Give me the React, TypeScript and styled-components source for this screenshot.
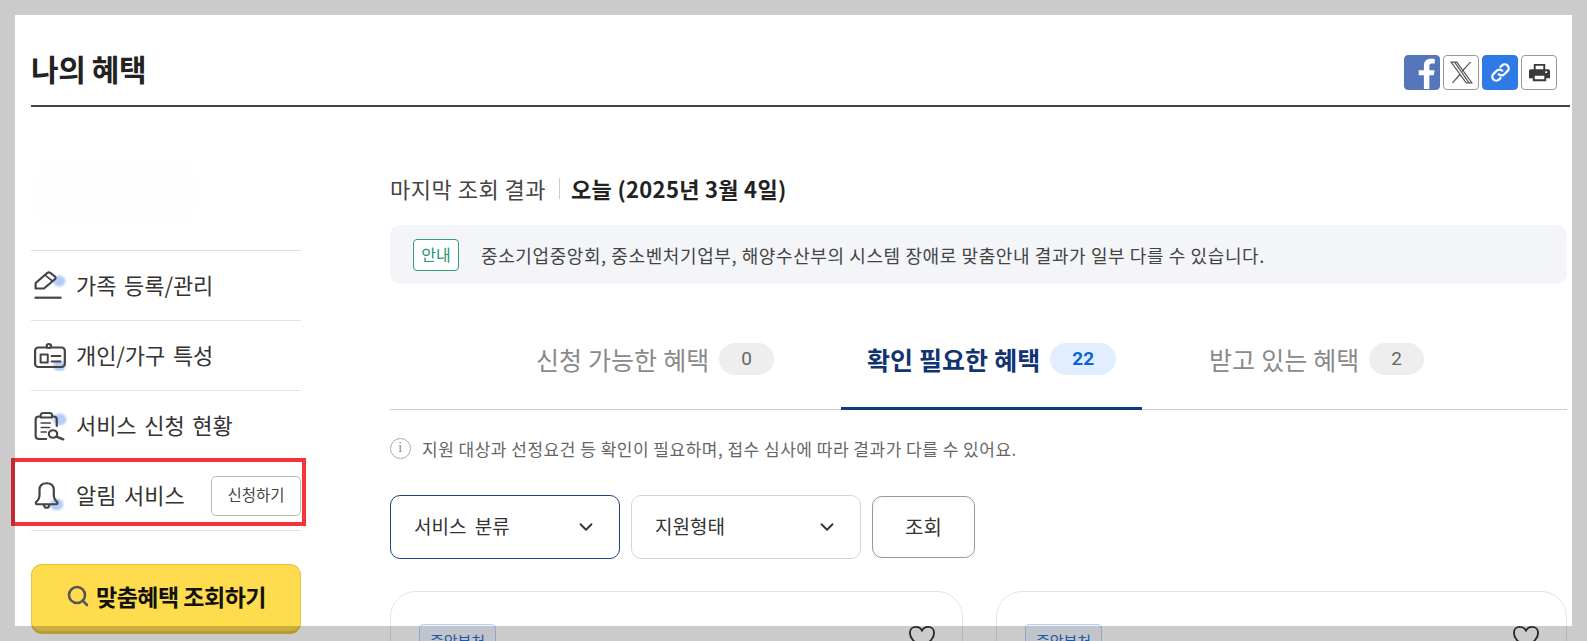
import styled, { createGlobalStyle } from "styled-components";
import { ChevronDown, Search } from "lucide-react";

const GlobalStyle = createGlobalStyle`
  html, body {
    margin: 0;
    height: 641px;
    overflow: hidden;
    background: #fff;
    font-family: "Noto Sans CJK KR", "Noto Sans", sans-serif;
    color: #222;
  }
  * {
    box-sizing: border-box;
  }
`;

const tabs = [
  { label: "신청 가능한 혜택", count: 0 },
  { label: "확인 필요한 혜택", count: 22, active: true },
  { label: "받고 있는 혜택", count: 2 },
];

const IconBlob = styled.circle`
  fill: #b4ccf7;
  stroke: none;
  filter: blur(0.8px);
`;

const MenuIcon = styled.svg.attrs({
  width: 33,
  height: 30,
  viewBox: "0 0 30 30",
  preserveAspectRatio: "none",
})`
  flex: none;
  margin-top: 1px;
  fill: none;
  stroke: #444;
  stroke-width: 2;
  stroke-linejoin: round;
  stroke-linecap: round;
`;

function PencilIcon() {
  return (
    <MenuIcon>
      <IconBlob cx={23} cy={10} r={5.5} />
      <path d="M1.5 17.5 V12 L12 2 Q13.5 .8 15 2 L19 5.5 Q20.2 7 19 8.2 L9 17.5 Z" />
      <path d="M10 4 L16.8 10.2" strokeWidth="1.6" />
      <path d="M.5 26.7 H25" strokeWidth="2.2" strokeLinecap="butt" />
    </MenuIcon>
  );
}

function CardIcon() {
  return (
    <MenuIcon>
      <IconBlob cx={23} cy={25} r={5.5} />
      <rect x="1" y="6.5" width="27" height="19.5" rx="3" />
      <circle cx="13.5" cy="5" r="2" fill="#fff" />
      <rect x="6" y="13.5" width="6.5" height="8" strokeWidth="1.8" />
      <path d="M16 15 H24 M16 20.5 H24" strokeWidth="1.8" />
    </MenuIcon>
  );
}

function ClipboardIcon() {
  return (
    <MenuIcon>
      <IconBlob cx={23.5} cy={8.5} r={6} />
      <path d="M11 28 H4.5 Q1.5 28 1.5 25 V8.5 Q1.5 5.5 4.5 5.5 H6 M16.5 5.5 H18 Q20.7 5.5 20.7 8.5 V15" />
      <path d="M6 6.5 V4.5 Q6 2 8.5 2 H14 Q16.5 2 16.5 4.5 V6.5 Z" strokeWidth="1.8" />
      <path d="M6.7 12 H14.7 M6.7 16.5 H14 M6.7 21 H11" strokeWidth="1.7" />
      <circle cx="17.3" cy="23" r="3.8" />
      <path d="M20.4 25.6 L26.5 28.3" strokeWidth="2.4" />
    </MenuIcon>
  );
}

function BellIcon() {
  return (
    <MenuIcon>
      <IconBlob cx={20.7} cy={23.5} r={6} />
      <path d="M1.8 21 Q5 18.5 5 14 V9 Q5 2.3 11.5 2.3 Q18 2.3 18 9 V14 Q18 18.5 21.2 21 Q21.8 23.3 20 23.3 H3 Q1.2 23.3 1.8 21 Z" />
      <path d="M9 24 Q9.5 26.8 11.5 26.8 Q13.5 26.8 14 24" />
    </MenuIcon>
  );
}

function HeartIcon() {
  return (
    <svg width="28" height="26" viewBox="0 0 30 28" fill="none" stroke="#333" strokeWidth="2">
      <path d="M15 25 C 8 19 2 15 2 8.5 C 2 4.5 5 2 8.5 2 C 11 2 13.5 3.5 15 6 C 16.5 3.5 19 2 21.5 2 C 25 2 28 4.5 28 8.5 C 28 15 22 19 15 25 Z" />
    </svg>
  );
}

export default function App() {
  return (
    <>
      <GlobalStyle />
      <Page>
        <Header>
          <Title>나의 혜택</Title>
          <ShareRow>
            <ShareButton $bg="#5577ba" $border="#5577ba">
              <svg width="36" height="35" viewBox="0 0 36 35">
                <path fill="#fff" d="M20 35 V20.5 H14.5 V15 H20 V10.5 C20 5.5 23 3 27.5 3 C29.5 3 31 3.2 31.5 3.3 V8 H28.5 C26.2 8 25.8 9.2 25.8 10.8 V15 H31.3 L30.5 20.5 H25.8 V35 Z" />
              </svg>
            </ShareButton>
            <ShareButton $bg="#fff" $border="#999">
              <svg width="25" height="25" viewBox="0 0 24 24">
                <path fill="none" stroke="#555" strokeWidth="1.1" d="M2 2 H7.5 L22 22 H16.5 Z" />
                <path fill="#555" d="M4.6 2 H6 L20 22 H18.6 Z M20 2 H21.4 L13 11.3 L12.2 10.2 Z M2.6 22 L10.4 13 L11.2 14.1 L4 22 Z" />
              </svg>
            </ShareButton>
            <ShareButton $bg="#2f7ae5" $border="#2f7ae5">
              <svg width="21" height="21" viewBox="0 0 24 24" fill="none" stroke="#fff" strokeWidth="2.6" strokeLinecap="round" strokeLinejoin="round">
                <path d="M10 14 a4.5 4.5 0 0 0 6.4 0 l3.6 -3.6 a4.5 4.5 0 0 0 -6.4 -6.4 l-1.6 1.6" />
                <path d="M14 10 a4.5 4.5 0 0 0 -6.4 0 l-3.6 3.6 a4.5 4.5 0 0 0 6.4 6.4 l1.6 -1.6" />
              </svg>
            </ShareButton>
            <ShareButton $bg="#fff" $border="#999">
              <svg width="23" height="23" viewBox="0 0 24 24">
                <path fill="#3a3a3a" fillRule="evenodd" d="M6 3 H18 V8.5 H21 Q23 8.5 23 10.5 V18 H19 V21 H5 V18 H1 V10.5 Q1 8.5 3 8.5 H6 Z M8 5 V8.5 H16 V5 Z M7 15.5 V19 H17 V15.5 Z M18 10.8 H20 V12.6 H18 Z" />
              </svg>
            </ShareButton>
          </ShareRow>
        </Header>

        <Layout>
          <Sidebar>
            <ProfileGhost />
            <Menu>
              <MenuRow>
                <PencilIcon />
                <MenuLabel>가족 등록/관리</MenuLabel>
              </MenuRow>
              <MenuRow>
                <CardIcon />
                <MenuLabel>개인/가구 특성</MenuLabel>
              </MenuRow>
              <MenuRow>
                <ClipboardIcon />
                <MenuLabel>서비스 신청 현황</MenuLabel>
              </MenuRow>
              <MenuRow>
                <BellIcon />
                <MenuLabel>알림 서비스</MenuLabel>
                <ApplyButton>신청하기</ApplyButton>
                <Highlight />
              </MenuRow>
            </Menu>
            <LookupButton>
              <Search size={24} color="#555" strokeWidth={2.6} />
              맞춤혜택 조회하기
            </LookupButton>
          </Sidebar>

          <Main>
            <LastLookup>
              <span>마지막 조회 결과</span>
              <LookupDate>오늘 (2025년 3월 4일)</LookupDate>
            </LastLookup>

            <Notice>
              <NoticeTag>안내</NoticeTag>
              중소기업중앙회, 중소벤처기업부, 해양수산부의 시스템 장애로 맞춤안내 결과가 일부 다를 수 있습니다.
            </Notice>

            <Tabs>
              {tabs.map((tab) => (
                <Tab key={tab.label} $active={tab.active}>
                  {tab.label}
                  <Count $active={tab.active}>{tab.count}</Count>
                </Tab>
              ))}
            </Tabs>

            <InfoLine>
              <InfoIcon>i</InfoIcon>
              지원 대상과 선정요건 등 확인이 필요하며, 접수 심사에 따라 결과가 다를 수 있어요.
            </InfoLine>

            <Filters>
              <Select $focused>
                <SelectLabel>서비스 분류</SelectLabel>
                <ChevronDown size={22} color="#333" />
              </Select>
              <Select>
                <SelectLabel>지원형태</SelectLabel>
                <ChevronDown size={22} color="#333" />
              </Select>
              <SearchButton>조회</SearchButton>
            </Filters>

            <Cards>
              <Card>
                <CardTop>
                  <CardTag>중앙부처</CardTag>
                  <HeartIcon />
                </CardTop>
              </Card>
              <Card>
                <CardTop>
                  <CardTag>중앙부처</CardTag>
                  <HeartIcon />
                </CardTop>
              </Card>
            </Cards>
          </Main>
        </Layout>
      </Page>
      <Frame />
    </>
  );
}

const Frame = styled.div`
  position: fixed;
  inset: 0;
  border: 15px solid #cbcbcb;
  mix-blend-mode: multiply;
  pointer-events: none;
`;

const Page = styled.div`
  width: 1587px;
  height: 641px;
  padding: 0 17px 0 31px;
  overflow: hidden;
`;

const Header = styled.header`
  display: flex;
  align-items: flex-end;
  justify-content: space-between;
  height: 107px;
  padding: 0 13px 15px 0;
  border-bottom: 2px solid #444;
`;

const Title = styled.h1`
  margin: 0;
  font-size: 30px;
  line-height: 44px;
  font-weight: 700;
  letter-spacing: -0.4px;
  color: #222;
`;

const ShareRow = styled.div`
  display: flex;
  gap: 3px;
`;

const ShareButton = styled.button<{ $bg: string; $border: string }>`
  display: flex;
  align-items: center;
  justify-content: center;
  width: 36px;
  height: 35px;
  padding: 0;
  overflow: hidden;
  background: ${(p) => p.$bg};
  border: 1px solid ${(p) => p.$border};
  border-radius: 4px;
`;

const Layout = styled.div`
  display: flex;
  gap: 89px;
  padding-right: 3px;
`;

const Sidebar = styled.aside`
  flex: 0 0 270px;
  padding-top: 58px;
`;

const ProfileGhost = styled.div`
  width: 150px;
  height: 56px;
  margin: 0 0 29px 10px;
  border-radius: 12px;
  background: #fdfdfd;
  filter: blur(5px);
`;

const Menu = styled.div`
  border-top: 1px solid #ddd;
`;

const MenuRow = styled.div`
  position: relative;
  display: flex;
  align-items: center;
  height: 70px;
  padding-left: 3px;
  border-bottom: 1px solid #e4e4e4;
`;

const MenuLabel = styled.span`
  margin: 0 0 4px 9px;
  font-size: 22px;
  letter-spacing: -0.1px;
  word-spacing: 3px;
  color: #333;
`;

const ApplyButton = styled.button`
  margin-left: auto;
  width: 90px;
  height: 40px;
  padding: 0 0 4px;
  font-family: inherit;
  font-size: 15.5px;
  color: #444;
  background: #fff;
  border: 1px solid #bbb;
  border-radius: 5px;
`;

const Highlight = styled.div`
  position: absolute;
  top: -3px;
  left: -20px;
  right: -5px;
  bottom: 4px;
  border: 4px solid #f5333a;
  pointer-events: none;
`;

const LookupButton = styled.button`
  display: flex;
  align-items: center;
  justify-content: center;
  gap: 6px;
  width: 100%;
  height: 70px;
  margin-top: 33px;
  padding: 0 0 4px;
  font-family: inherit;
  font-size: 23px;
  font-weight: 700;
  letter-spacing: -0.5px;
  color: #111;
  background: #ffdc4e;
  border: 1px solid #e3c244;
  border-bottom: 3px solid #e3c244;
  border-radius: 11px;
`;

const Main = styled.main`
  flex: 1;
  min-width: 0;
  padding-top: 61px;
`;

const LastLookup = styled.div`
  display: flex;
  align-items: center;
  height: 40px;
  font-size: 22px;
  color: #444;
  letter-spacing: 0.5px;
`;

const LookupDate = styled.strong`
  margin-left: 13px;
  padding-left: 11px;
  line-height: 21px;
  font-weight: 700;
  letter-spacing: 0.3px;
  color: #222;
  border-left: 1px solid #ccc;
`;

const Notice = styled.div`
  display: flex;
  align-items: center;
  gap: 22px;
  height: 59px;
  margin-top: 17px;
  padding-left: 23px;
  font-size: 18px;
  letter-spacing: 0.6px;
  color: #444;
  background: #f3f5f9;
  border-radius: 10px;
`;

const NoticeTag = styled.span`
  display: flex;
  align-items: center;
  justify-content: center;
  width: 46px;
  height: 32px;
  padding-bottom: 1px;
  font-size: 16px;
  letter-spacing: 0;
  color: #25946f;
  background: #fff;
  border: 1px solid #2f9e7a;
  border-radius: 4px;
`;

const Tabs = styled.div`
  display: flex;
  justify-content: center;
  gap: 41px;
  height: 126px;
  padding-left: 3px;
  border-bottom: 1px solid #ccc;
`;

const Tab = styled.div<{ $active?: boolean }>`
  display: flex;
  align-items: center;
  gap: 10px;
  height: 126px;
  padding: 44px 26px 18px;
  font-size: 25px;
  font-weight: ${(p) => (p.$active ? 700 : 400)};
  word-spacing: 0.5px;
  color: ${(p) => (p.$active ? "#10346f" : "#8a8a8a")};
  border-bottom: 3px solid ${(p) => (p.$active ? "#0f3b85" : "transparent")};
`;

const Count = styled.span<{ $active?: boolean }>`
  display: flex;
  align-items: center;
  justify-content: center;
  height: 32px;
  padding: 0 22px;
  font-family: Roboto, sans-serif;
  font-size: 19px;
  font-weight: ${(p) => (p.$active ? 700 : 400)};
  color: ${(p) => (p.$active ? "#0b63d8" : "#666")};
  background: ${(p) => (p.$active ? "#e2eeff" : "#eee")};
  border-radius: 16px;
`;

const InfoLine = styled.div`
  display: flex;
  align-items: center;
  gap: 11px;
  height: 24px;
  margin-top: 26px;
  font-size: 17px;
  letter-spacing: 0.5px;
  color: #666;
`;

const InfoIcon = styled.span`
  display: flex;
  align-items: center;
  justify-content: center;
  width: 21px;
  height: 21px;
  font-family: "Liberation Serif", serif;
  font-size: 14px;
  color: #888;
  border: 1px solid #aaa;
  border-radius: 50%;
`;

const Filters = styled.div`
  display: flex;
  align-items: center;
  gap: 11px;
  margin-top: 35px;
`;

const Select = styled.div<{ $focused?: boolean }>`
  display: flex;
  align-items: center;
  justify-content: space-between;
  width: 230px;
  height: 64px;
  padding: 0 22px;
  border: 1px solid ${(p) => (p.$focused ? "#1c4587" : "#d5d5d5")};
  border-radius: 10px;
`;

const SelectLabel = styled.span`
  margin-left: 1px;
  padding-bottom: 3px;
  font-size: 19px;
  word-spacing: 4px;
  color: #333;
`;

const SearchButton = styled.button`
  width: 103px;
  height: 62px;
  padding: 0 0 2px;
  font-family: inherit;
  font-size: 20px;
  color: #333;
  background: #fff;
  border: 1px solid #999;
  border-radius: 10px;
`;

const Cards = styled.div`
  display: grid;
  grid-template-columns: 573px 571px;
  justify-content: space-between;
  margin-top: 32px;
`;

const Card = styled.article`
  height: 200px;
  padding: 32px 26px 32px 28px;
  border: 1px solid #e4e4e4;
  border-radius: 26px;
`;

const CardTop = styled.div`
  display: flex;
  align-items: flex-start;
  justify-content: space-between;

  svg {
    margin-top: 1px;
  }
`;

const CardTag = styled.span`
  display: flex;
  align-items: center;
  justify-content: center;
  width: 77px;
  height: 32px;
  font-size: 15px;
  color: #1f6fd0;
  background: #f3f8ff;
  border: 1px solid #b5d2f5;
  border-radius: 4px;
`;
